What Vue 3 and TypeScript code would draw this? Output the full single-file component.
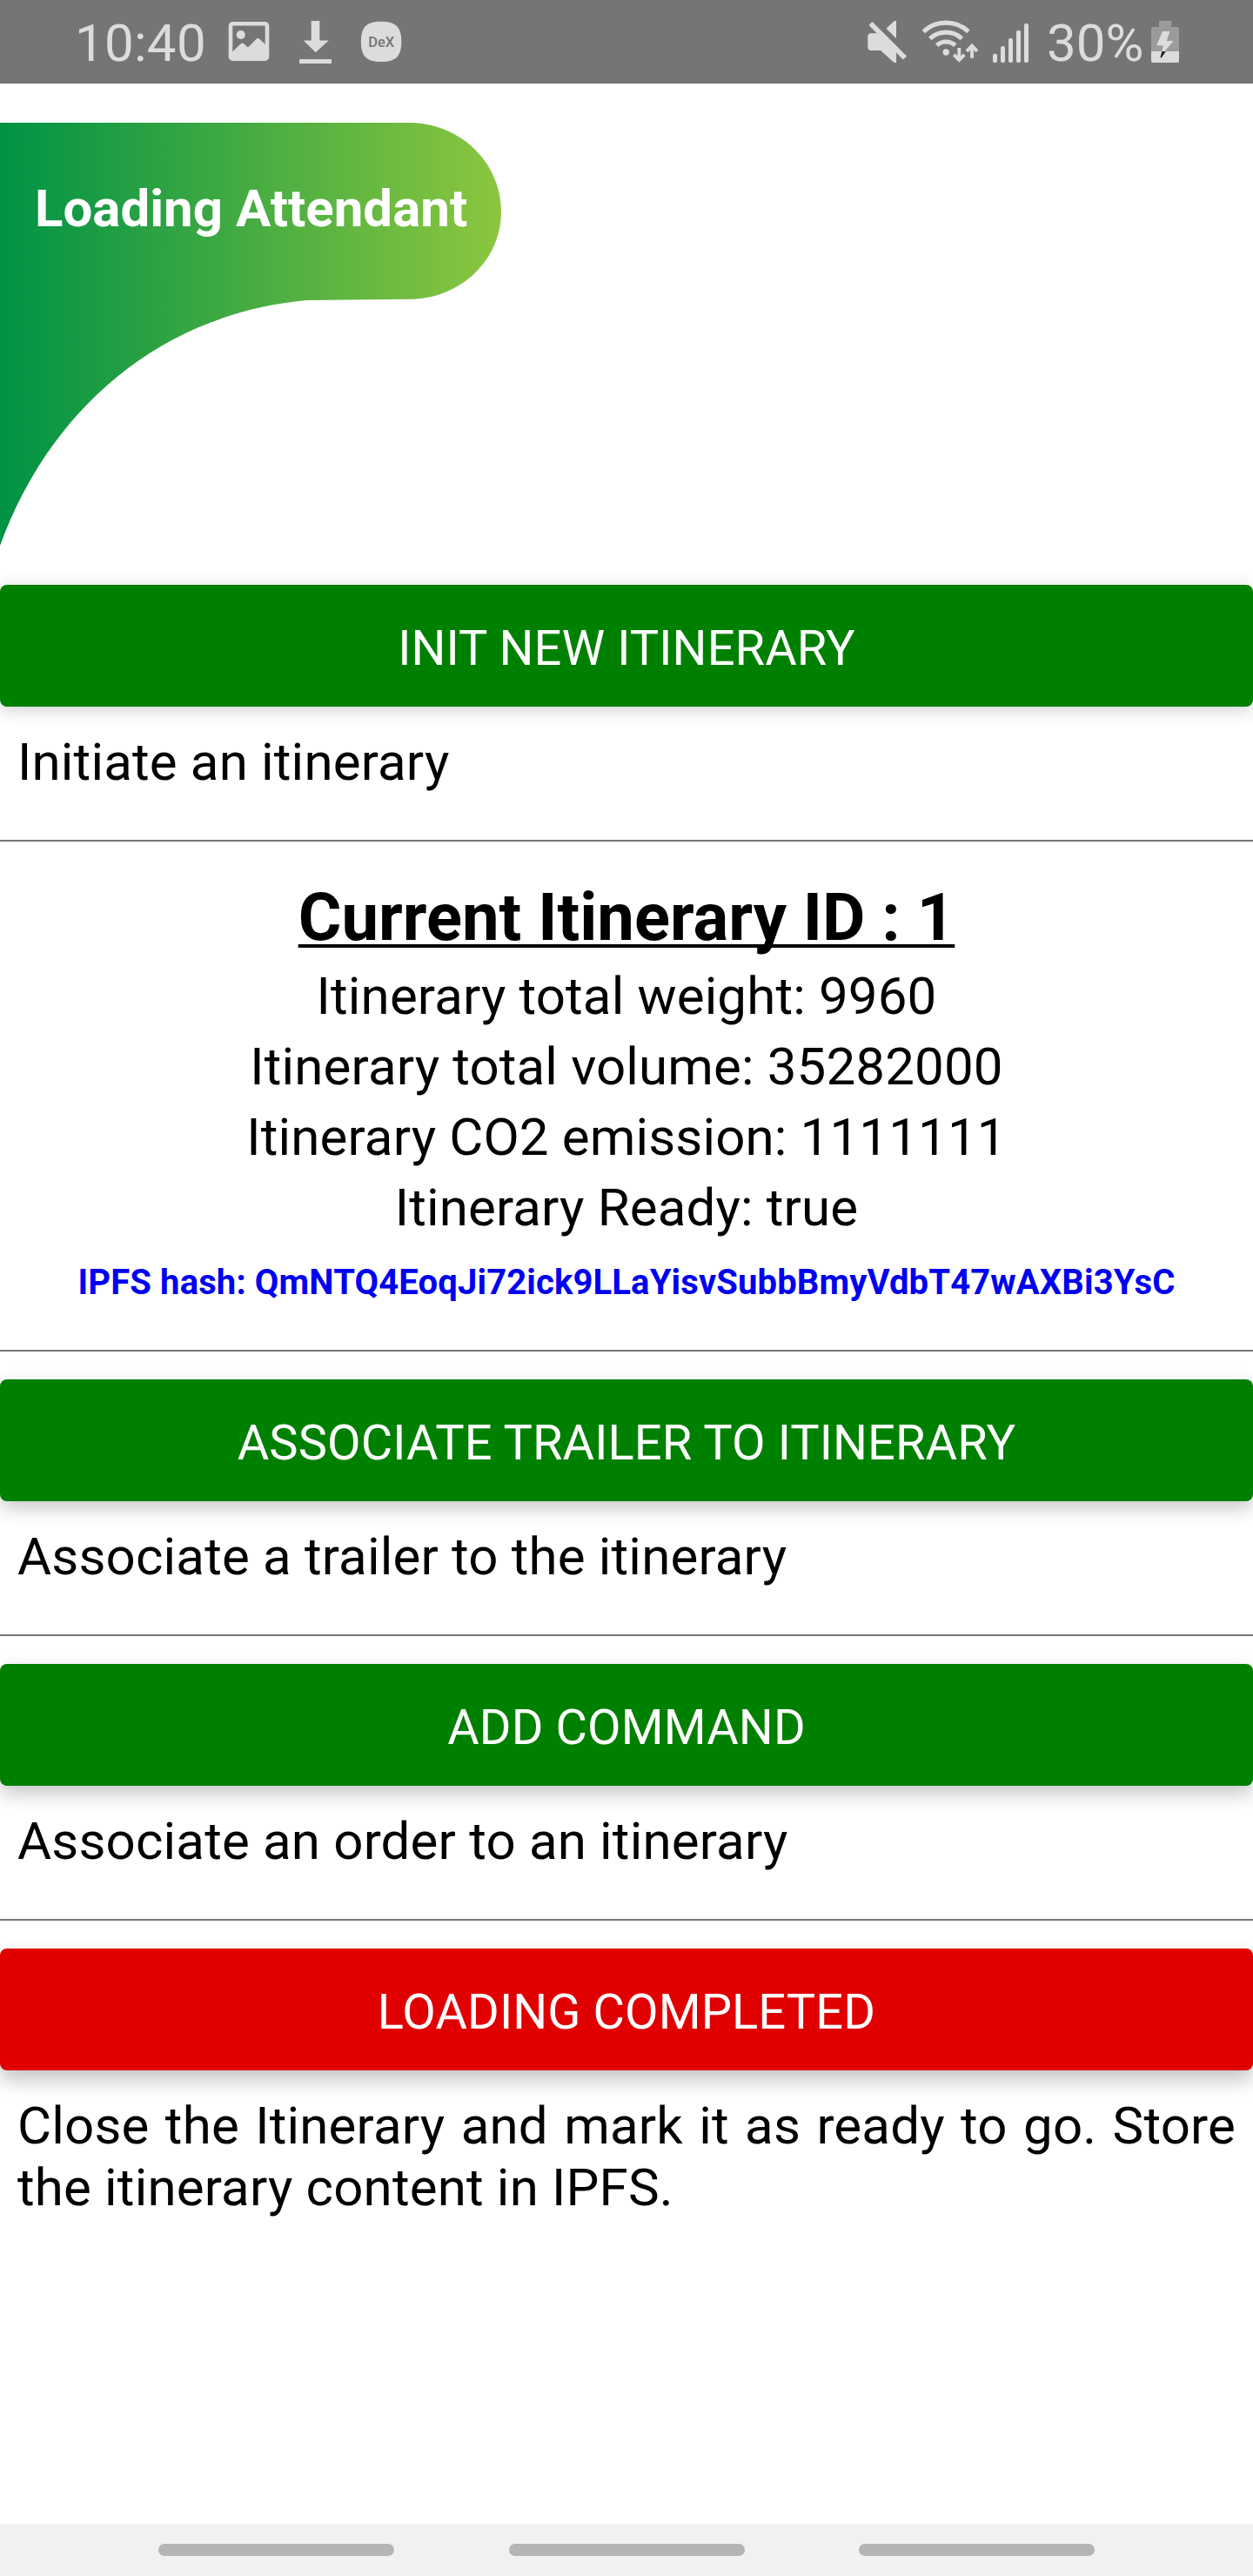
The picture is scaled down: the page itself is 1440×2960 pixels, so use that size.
<script setup lang="ts">
interface Action {
  label: string
  description: string
  tone: 'go' | 'stop'
  depth: number
}

const initAction: Action = {
  label: 'Init new itinerary',
  description: 'Initiate an itinerary',
  tone: 'go',
  depth: 1,
}

const actions: Action[] = [
  { label: 'Associate trailer to itinerary', description: 'Associate a trailer to the itinerary', tone: 'go', depth: 2 },
  { label: 'Add command', description: 'Associate an order to an itinerary', tone: 'go', depth: 3 },
  {
    label: 'Loading completed',
    description: 'Close the Itinerary and mark it as ready to go. Store the itinerary content in IPFS.',
    tone: 'stop',
    depth: 4,
  },
]

const details: string[] = [
  'Itinerary total weight: 9960',
  'Itinerary total volume: 35282000',
  'Itinerary CO2 emission: 1111111',
  'Itinerary Ready: true',
]

const signalBars = [
  { x: 1141, y: 61.7 },
  { x: 1150, y: 53 },
  { x: 1159, y: 44 },
  { x: 1168, y: 35 },
  { x: 1177, y: 27 },
]
</script>

<template>
  <div class="screen">
    <header class="status">
      <div class="status-group">
        <span class="clock">10:40</span>
        <svg class="picture" width="48" height="96" viewBox="262 0 48 96">
          <rect x="265" y="27.3" width="42" height="40.4" rx="2.5" fill="none" stroke="#dcdcdc" stroke-width="4.6" />
          <circle cx="276.8" cy="40" r="5.1" fill="#dcdcdc" />
          <path d="M266 60.5L276.8 50.3Q278.5 48.8 280.2 50.3L285 54.5L294.6 44.8Q296.4 43.2 298.2 44.8L306 52V68H266Z" fill="#dcdcdc" />
        </svg>
        <svg class="download" width="38" height="96" viewBox="344 0 38 96">
          <path d="M357.7 24H367.3V46.5H377.8L362.7 60.2L348.8 46.5H357.7ZM344 68H381V73H344Z" fill="#dcdcdc" />
        </svg>
        <svg class="dex" width="48" height="96" viewBox="414 0 48 96">
          <path d="M438 24.7C455 24.7 461.3 31 461.3 47.8S455 71 438 71S414.9 64.6 414.9 47.8S421 24.7 438 24.7Z" fill="#dcdcdc" />
          <text x="438.2" y="53.8" text-anchor="middle" textLength="30" lengthAdjust="spacingAndGlyphs" class="dex-text">DeX</text>
        </svg>
      </div>
      <div class="status-group">
        <svg width="46" height="96" viewBox="996 0 46 96" fill="#dcdcdc">
          <path d="M997.3 42Q997.3 38.3 1001 38.3H1008L1030 60V72H1027.5L1012 58H1001Q997.3 58 997.3 54.3Z" />
          <path d="M1018.5 32.7L1027.6 24.3Q1029 23.3 1030 24.3V44.2Z" />
          <path d="M1000.5 27L1040 66.5" stroke="#dcdcdc" stroke-width="5.6" />
        </svg>
        <svg class="wifi" width="66" height="96" viewBox="1060 0 66 96" fill="none" stroke="#dcdcdc">
          <g stroke-width="5.2">
            <path d="M1061.3 36.3A38 38 0 0 1 1112.9 36.3" />
            <path d="M1068.8 44.3A27 27 0 0 1 1105.4 44.3" />
            <path d="M1076.6 52.2A15.5 15.5 0 0 1 1097.8 52.2" />
          </g>
          <circle cx="1087.2" cy="60" r="3.7" fill="#dcdcdc" stroke="none" />
          <path d="M1102.3 55V69M1096.3 62.8L1102.3 69L1108.3 62.8M1117 66.7V53M1111 58.8L1117 52.6L1123 58.8" stroke-width="3.9" />
        </svg>
        <svg class="signal" width="42" height="96" viewBox="1141 0 42 96" fill="#dcdcdc">
          <rect v-for="bar in signalBars" :key="bar.x" :x="bar.x" :y="bar.y" width="5" :height="72 - bar.y" rx="2" />
        </svg>
        <span class="percent">30%</span>
        <svg class="battery" width="32" height="96" viewBox="1323 0 32 96">
          <path d="M1332 24.8Q1332 24 1333 24H1345.3Q1346.3 24 1346.3 25V31H1353Q1355 31 1355 33V60H1323V33Q1323 31 1325 31H1332Z" fill="#9b9b9b" />
          <path d="M1323 59H1355V70Q1355 72 1353 72H1325Q1323 72 1323 70Z" fill="#dcdcdc" />
          <path d="M1336 36H1344.3L1340.8 47H1348.6L1338.5 59H1335.3L1336.8 52.3H1329.3Z" fill="#dcdcdc" />
          <path d="M1335.3 59H1339.8L1334.8 66.5L1333.5 66Z" fill="#222" />
        </svg>
      </div>
    </header>

    <div class="banner">
      <svg class="banner-shape" width="577" height="488" viewBox="0 140 577 488">
        <defs>
          <linearGradient id="leaf" gradientUnits="userSpaceOnUse" x1="0" y1="0" x2="576" y2="0">
            <stop offset="0" stop-color="#009245" />
            <stop offset="1" stop-color="#8cc63f" />
          </linearGradient>
        </defs>
        <path d="M0 141H470C528 141 576 186 576 243S528 343.8 470 343.8L352 345C180 361 55 475 0 627Z" fill="url(#leaf)" />
      </svg>
      <h1 class="banner-title">Loading Attendant</h1>
    </div>

    <main>
      <section class="action">
        <button type="button" :class="['button', initAction.tone, 'depth-' + initAction.depth]">{{ initAction.label }}</button>
        <p class="description">{{ initAction.description }}</p>
      </section>

      <section class="summary">
        <h2 class="summary-title">Current Itinerary ID : 1</h2>
        <p v-for="line in details" :key="line" class="detail">{{ line }}</p>
        <a class="hash">IPFS hash: QmNTQ4EoqJi72ick9LLaYisvSubbBmyVdbT47wAXBi3YsC</a>
      </section>

      <section v-for="action in actions" :key="action.label" class="action">
        <button type="button" :class="['button', action.tone, 'depth-' + action.depth]">{{ action.label }}</button>
        <p class="description">{{ action.description }}</p>
      </section>
    </main>

    <nav class="gestures">
      <span v-for="n in 3" :key="n" class="pill"></span>
    </nav>
  </div>
</template>

<style>
body {
  margin: 0;
  background: #fff;
}
</style>

<style scoped>
.screen {
  width: 1440px;
  height: 2960px;
  display: flex;
  flex-direction: column;
  overflow: hidden;
  background: #fff;
  color: #000;
  font-family: Roboto, 'Liberation Sans', sans-serif;
}
.status {
  box-sizing: border-box;
  height: 96px;
  flex: none;
  display: flex;
  justify-content: space-between;
  padding: 0 85px 0 86px;
  background: #757575;
  color: #dcdcdc;
  font-size: 60px;
  line-height: 100px;
}
.status-group {
  display: flex;
}
.status svg {
  display: block;
  flex: none;
}
.clock {
  width: 176px;
  letter-spacing: 0.3px;
  white-space: nowrap;
}
.download {
  margin-left: 34px;
}
.dex {
  margin-left: 32px;
}
.dex-text {
  font-size: 17px;
  font-weight: 500;
  fill: #757575;
}
.wifi {
  margin-left: 18px;
}
.signal {
  margin-left: 15px;
}
.percent {
  width: 120px;
  margin-left: 20px;
  white-space: nowrap;
}
.banner {
  height: 532px;
  flex: none;
  display: grid;
  padding-top: 44px;
}
.banner-shape,
.banner-title {
  grid-area: 1 / 1;
}
.banner-shape {
  display: block;
}
.banner-title {
  margin: 62px 0 0 40px;
  font-size: 60px;
  line-height: 76px;
  font-weight: 700;
  color: #fff;
}
main {
  flex: 1;
}
.action {
  height: 293px;
  border-bottom: 2px solid #757575;
  margin-bottom: 32px;
}
.action:last-child {
  border: 0;
  margin: 0;
}
.button {
  display: block;
  box-sizing: border-box;
  width: 100%;
  height: 140px;
  border: 0;
  border-radius: 8px;
  padding: 5px 0 0;
  font: 400 56px/66px Roboto, 'Liberation Sans', sans-serif;
  letter-spacing: 0.1px;
  text-transform: uppercase;
  color: #fff;
}
.go {
  background: #008000;
}
.stop {
  background: #e00000;
}
.depth-1 {
  box-shadow: 0 4px 20px rgba(0, 0, 0, 0.19);
}
.depth-2 {
  box-shadow: 0 8px 22px rgba(0, 0, 0, 0.22);
}
.depth-3 {
  box-shadow: 0 9px 22px rgba(0, 0, 0, 0.23);
}
.depth-4 {
  box-shadow: 0 11px 22px rgba(0, 0, 0, 0.24);
}
.description {
  margin: 0;
  padding: 28px 20px 0;
  font-size: 60px;
  line-height: 71px;
  letter-spacing: 0.18px;
  text-align: justify;
}
.summary {
  box-sizing: border-box;
  height: 586px;
  margin-top: -32px;
  margin-bottom: 32px;
  padding-top: 42px;
  border-bottom: 2px solid #757575;
  text-align: center;
}
.summary-title {
  margin: 0 0 5px;
  font-size: 76px;
  line-height: 90px;
  font-weight: 700;
  text-decoration: underline;
  text-decoration-skip-ink: none;
  text-decoration-thickness: 4px;
  text-underline-offset: 5px;
}
.detail {
  margin: 0;
  font-size: 60px;
  line-height: 81px;
  letter-spacing: 0.15px;
}
.hash {
  display: block;
  margin-top: 22px;
  font-size: 40px;
  line-height: 48px;
  font-weight: 700;
  letter-spacing: 0.13px;
  color: #0000f0;
}
.gestures {
  flex: none;
  height: 60px;
  display: flex;
  align-items: center;
  justify-content: center;
  gap: 131.5px;
  background: #f1f1f1;
}
.pill {
  width: 271px;
  height: 14px;
  border-radius: 7px;
  background: #b5b5b5;
}
</style>
